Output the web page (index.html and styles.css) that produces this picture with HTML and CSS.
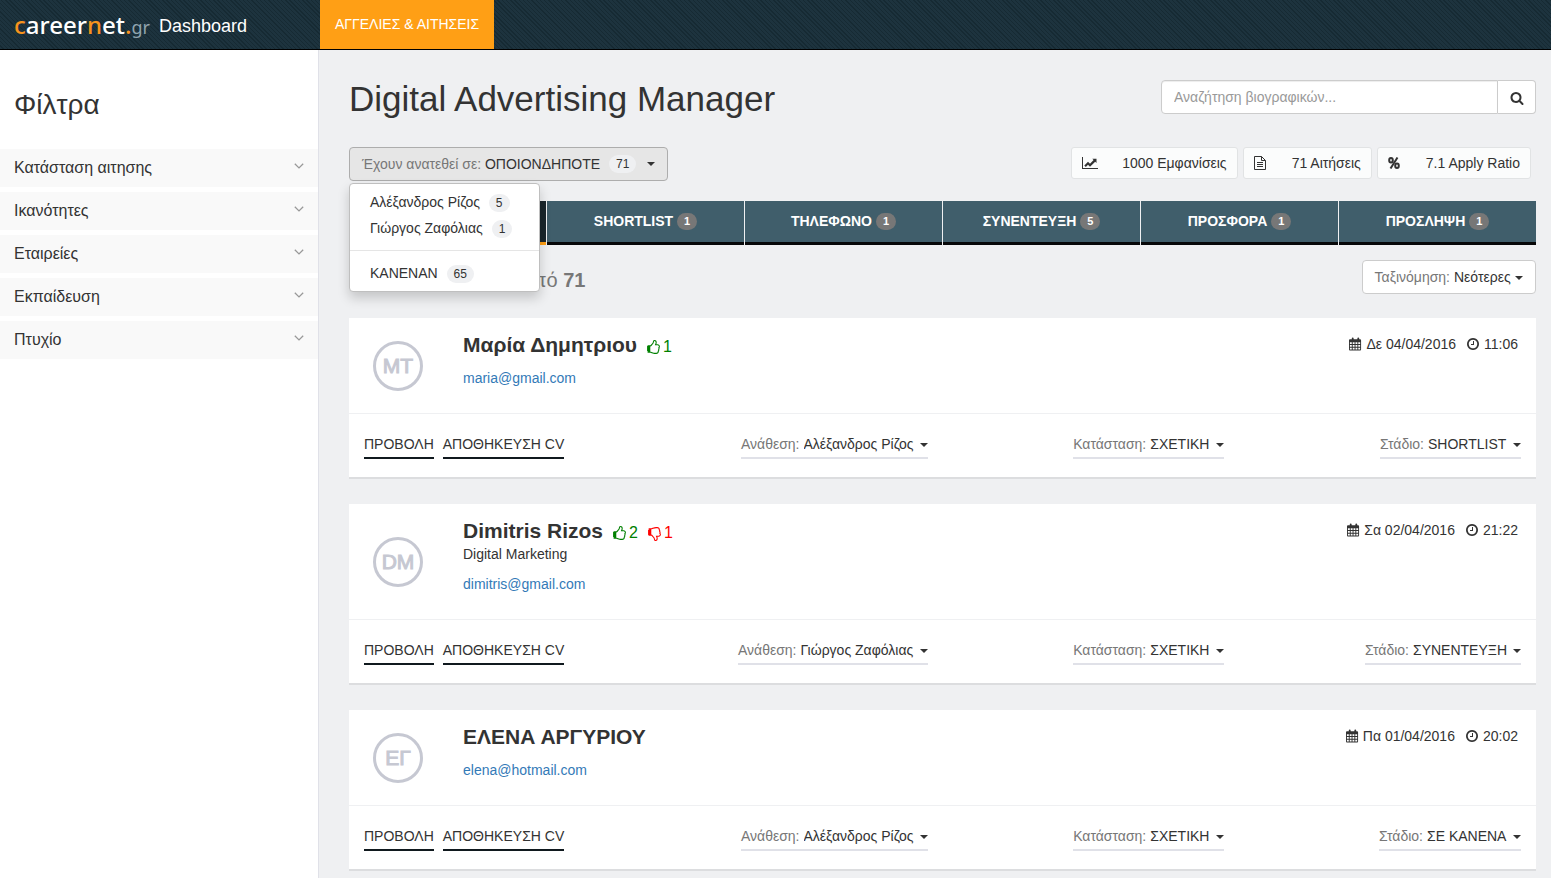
FILE: index.html
```html
<!DOCTYPE html>
<html lang="el">
<head>
<meta charset="utf-8">
<title>careernet.gr Dashboard</title>
<link rel="stylesheet" href="styles.css">
</head>
<body>
<svg class="sprite" aria-hidden="true">
  <symbol id="search" viewBox="0 0 1792 1792"><path d="M1216 832q0-185-131.5-316.5t-316.5-131.5-316.5 131.5-131.5 316.5 131.5 316.5 316.5 131.5 316.5-131.5 131.5-316.5zm512 832q0 52-38 90t-90 38q-54 0-90-38l-343-342q-179 124-399 124-143 0-273.5-55.5t-225-150-150-225-55.5-273.5 55.5-273.5 150-225 225-150 273.5-55.5 273.5 55.5 225 150 150 225 55.5 273.5q0 220-124 399l343 343q37 37 37 90z"/></symbol>
  <symbol id="thumb" viewBox="0 0 1792 1792"><path d="M256 1408q0-26-19-45t-45-19-45 19-19 45 19 45 45 19 45-19 19-45zm1280-640q0-51-39-89.500t-89-38.500h-352q0-58 48-159.500t48-160.500q0-98-32-145t-128-47q-26 26-38 85t-30.500 125.500-59.500 109.500q-22 23-77 91-4 5-23 30t-31.500 41-34.500 42.500-40 44-38.500 35.500-40 27-35.500 9h-32v640h32q13 0 31.500 3t33 6.500 38 11 35 11.500 35.500 12.500 29 10.500q211 73 342 73h121q192 0 192-167 0-26-5-56 30-16 47.500-52.500t17.500-73.500-18-69q53-50 53-119 0-25-10-55.500t-25-47.500q32-1 53.500-47t21.500-81zm128-1q0 89-49 163 9 33 9 69 0 77-38 144 3 21 3 43 0 101-60 178 1 139-85 219.500t-227 80.500h-36-93q-96 0-189.500-22.500t-216.500-65.500q-116-40-138-40h-288q-53 0-90.500-37.500t-37.500-90.500v-640q0-53 37.500-90.500t90.500-37.500h274q36-24 137-155 58-75 107-128 24-25 35.500-85.500t30.500-126.500 62-108q39-37 90-37 84 0 151 32.500t102 101.500 35 186q0 93-48 192h176q104 0 180 76t76 179z"/></symbol>
  <symbol id="clock" viewBox="0 0 1792 1792"><path d="M1024 544v448q0 14-9 23t-23 9h-320q-14 0-23-9t-9-23v-64q0-14 9-23t23-9h224v-352q0-14 9-23t23-9h64q14 0 23 9t9 23zm416 352q0-148-73-273t-198-198-273-73-273 73-198 198-73 273 73 273 198 198 273 73 273-73 198-198 73-273zm224 0q0 209-103 385.500t-279.500 279.500-385.500 103-385.500-103-279.500-279.500-103-385.500 103-385.500 279.500-279.500 385.500-103 385.500 103 279.500 279.500 103 385.500z"/></symbol>
  <symbol id="calendar" viewBox="0 0 14 14"><path fill-rule="evenodd" d="M1 2h2V1q0-1 1-1t1 1v1h4V1q0-1 1-1t1 1v1h1q1 0 1 1v10q0 1-1 1H1q-1 0-1-1V3q0-1 1-1zM1 5v2h2V5zM4 5v2h2V5zM7 5v2h2V5zM10 5v2h2V5zM1 8v2h2V8zM4 8v2h2V8zM7 8v2h2V8zM10 8v2h2V8zM1 11v2h2v-2zM4 11v2h2v-2zM7 11v2h2v-2zM10 11v2h2v-2z"/></symbol>
  <symbol id="chart" viewBox="0 0 16 14"><path d="M0 1h1v11h15v1H0zM2.300 9.400L6 5.700l2 2 3.600-3.600L10.300 2.800H14.500V7l-1.300-1.300L8 10.800l-2-2-2.200 2.200z"/></symbol>
  <symbol id="file" viewBox="0 0 12 14"><path fill="none" stroke="currentColor" d="M.5.500h7l4 4v9H.500zM7.500.500v4h4M3 6.500h6M3 8.500h6M3 10.500h6"/></symbol>
  <symbol id="percent" viewBox="0 0 12 12"><g fill="none" stroke="currentColor" stroke-width="2"><ellipse cx="3" cy="3.200" rx="1.800" ry="2.200"/><ellipse cx="9" cy="8.800" rx="1.800" ry="2.200"/><path d="M9.500.500L2.500 11.500"/></g></symbol>
  <symbol id="chevron" viewBox="0 0 10 6"><path fill="none" stroke="currentColor" stroke-width="1.300" d="M.8.700L5 4.900 9.200.700"/></symbol>
</svg>

<header class="topbar">
  <a class="brand" href="#"><span class="logo"><b>c</b>areer<b>n</b>et<b>.</b><i>gr</i></span><span class="product">Dashboard</span></a>
  <nav><a class="nav-link" href="#">ΑΓΓΕΛΙΕΣ &amp; ΑΙΤΗΣΕΙΣ</a></nav>
</header>

<div class="page">
  <aside class="sidebar">
    <h2>Φίλτρα</h2>
    <button class="filter">Κατάσταση αιτησης<svg><use href="#chevron"/></svg></button>
    <button class="filter">Ικανότητες<svg><use href="#chevron"/></svg></button>
    <button class="filter">Εταιρείες<svg><use href="#chevron"/></svg></button>
    <button class="filter">Εκπαίδευση<svg><use href="#chevron"/></svg></button>
    <button class="filter">Πτυχίο<svg><use href="#chevron"/></svg></button>
  </aside>

  <main class="main">
    <div class="title-row">
      <h1>Digital Advertising Manager</h1>
      <form class="search">
        <input type="text" aria-label="Αναζήτηση βιογραφικών" placeholder="Αναζήτηση βιογραφικών...">
        <button type="button" aria-label="Αναζήτηση"><svg class="icon"><use href="#search"/></svg></button>
      </form>
    </div>

    <div class="tools">
      <div class="dropdown">
        <button class="toggle" aria-expanded="true"><span class="muted">Έχουν ανατεθεί σε:</span> ΟΠΟΙΟΝΔΗΠΟΤΕ <span class="count">71</span><span class="caret"></span></button>
        <ul class="menu">
          <li><a href="#">Αλέξανδρος Ρίζος <span class="count">5</span></a></li>
          <li><a href="#">Γιώργος Ζαφόλιας <span class="count">1</span></a></li>
          <li class="divider"></li>
          <li><a href="#">ΚΑΝΕΝΑΝ <span class="count">65</span></a></li>
        </ul>
      </div>
      <div class="stats">
        <div class="stat"><svg class="chart"><use href="#chart"/></svg>1000 Εμφανίσεις</div>
        <div class="stat"><svg class="file"><use href="#file"/></svg>71 Αιτήσεις</div>
        <div class="stat"><svg class="percent"><use href="#percent"/></svg>7.1 Apply Ratio</div>
      </div>
    </div>

    <nav class="tabs">
      <a class="tab active" href="#" aria-label="Όλες"></a>
      <a class="tab" href="#">SHORTLIST <span class="badge">1</span></a>
      <a class="tab" href="#">ΤΗΛΕΦΩΝΟ <span class="badge">1</span></a>
      <a class="tab" href="#">ΣΥΝΕΝΤΕΥΞΗ <span class="badge">5</span></a>
      <a class="tab" href="#">ΠΡΟΣΦΟΡΑ <span class="badge">1</span></a>
      <a class="tab" href="#">ΠΡΟΣΛΗΨΗ <span class="badge">1</span></a>
    </nav>

    <div class="list-head">
      <h3>Αιτήσεις 1 έως 20 <span>από <b>71</b></span></h3>
      <div class="sort"><label for="sort">Ταξινόμηση:</label><select id="sort"><option>Νεότερες</option></select></div>
    </div>

    <article class="card">
      <div class="card-top">
        <div class="avatar">ΜΤ</div>
        <div class="person">
          <h4>Μαρία Δημητριου <span class="vote up"><svg><use href="#thumb"/></svg>1</span></h4>
          <p><a href="#">maria@gmail.com</a></p>
        </div>
        <div class="when"><svg><use href="#calendar"/></svg><span>Δε 04/04/2016</span><svg class="clock"><use href="#clock"/></svg><span>11:06</span></div>
      </div>
      <div class="card-actions">
        <div class="links"><a href="#">ΠΡΟΒΟΛΗ</a><a href="#">ΑΠΟΘΗΚΕΥΣΗ CV</a></div>
        <div class="pick"><label for="a1">Ανάθεση:</label><select id="a1"><option>Αλέξανδρος Ρίζος</option></select></div>
        <div class="pick"><label for="k1">Κατάσταση:</label><select id="k1"><option>ΣΧΕΤΙΚΗ</option></select></div>
        <div class="pick"><label for="s1">Στάδιο:</label><select id="s1"><option>SHORTLIST</option></select></div>
      </div>
    </article>

    <article class="card">
      <div class="card-top">
        <div class="avatar">DM</div>
        <div class="person">
          <h4>Dimitris Rizos <span class="vote up"><svg><use href="#thumb"/></svg>2</span><span class="vote down"><svg><use href="#thumb"/></svg>1</span></h4>
          <div>Digital Marketing</div>
          <p><a href="#">dimitris@gmail.com</a></p>
        </div>
        <div class="when"><svg><use href="#calendar"/></svg><span>Σα 02/04/2016</span><svg class="clock"><use href="#clock"/></svg><span>21:22</span></div>
      </div>
      <div class="card-actions">
        <div class="links"><a href="#">ΠΡΟΒΟΛΗ</a><a href="#">ΑΠΟΘΗΚΕΥΣΗ CV</a></div>
        <div class="pick"><label for="a2">Ανάθεση:</label><select id="a2"><option>Γιώργος Ζαφόλιας</option></select></div>
        <div class="pick"><label for="k2">Κατάσταση:</label><select id="k2"><option>ΣΧΕΤΙΚΗ</option></select></div>
        <div class="pick"><label for="s2">Στάδιο:</label><select id="s2"><option>ΣΥΝΕΝΤΕΥΞΗ</option></select></div>
      </div>
    </article>

    <article class="card">
      <div class="card-top">
        <div class="avatar">ΕΓ</div>
        <div class="person">
          <h4>ΕΛΕΝΑ ΑΡΓΥΡΙΟΥ</h4>
          <p><a href="#">elena@hotmail.com</a></p>
        </div>
        <div class="when"><svg><use href="#calendar"/></svg><span>Πα 01/04/2016</span><svg class="clock"><use href="#clock"/></svg><span>20:02</span></div>
      </div>
      <div class="card-actions">
        <div class="links"><a href="#">ΠΡΟΒΟΛΗ</a><a href="#">ΑΠΟΘΗΚΕΥΣΗ CV</a></div>
        <div class="pick"><label for="a3">Ανάθεση:</label><select id="a3"><option>Αλέξανδρος Ρίζος</option></select></div>
        <div class="pick"><label for="k3">Κατάσταση:</label><select id="k3"><option>ΣΧΕΤΙΚΗ</option></select></div>
        <div class="pick"><label for="s3">Στάδιο:</label><select id="s3"><option>ΣΕ ΚΑΝΕΝΑ</option></select></div>
      </div>
    </article>
  </main>
</div>
</body>
</html>
```

FILE: styles.css
```css
* { box-sizing: border-box; }
body {
  margin: 0;
  background: #eff0f2;
  color: #333;
  font: 14px/20px "Liberation Sans", Arial, sans-serif;
}
h1, h2, h3, h4, p, ul { margin: 0; padding: 0; font-weight: 400; }
button, input, select { font: inherit; color: inherit; }
button { cursor: pointer; }
a { color: inherit; text-decoration: none; }
svg { fill: currentColor; flex: none; }
.sprite { display: none; }

.topbar {
  display: grid;
  grid-template-columns: 320px 1fr;
  height: 50px;
  border-bottom: 1px solid #000;
  background: repeating-linear-gradient(45deg, #1d333e 0 2px, #162a33 2px 3px);
  color: #fff;
}
.brand { display: flex; align-items: center; gap: 9px; padding: 3px 0 0 14px; }
.logo { font: 500 24px/28px "Noto Sans", sans-serif; }
.logo b { color: #f7941d; font-weight: 500; }
.logo i { color: #90a4ae; font-style: normal; font-weight: 400; font-size: 18px; }
.product { font-size: 18px; }
nav { display: flex; }
.nav-link { padding: 14px 15px; background: #ff9f15; line-height: 20px; }

.page { display: grid; grid-template-columns: 319px 1fr; min-height: calc(100vh - 50px); }
.sidebar { background: #fff; border-right: 1px solid #e0e1e8; padding-top: 38px; }
.sidebar h2 { padding-left: 14px; margin-bottom: 28px; font-size: 28px; line-height: 33px; }
.filter {
  display: flex;
  align-items: center;
  justify-content: space-between;
  width: 100%;
  height: 38px;
  margin-bottom: 5px;
  padding: 0 14px;
  border: 0;
  background: #f9f9f9;
  font-size: 16px;
}
.filter svg { width: 10px; height: 6px; margin-bottom: 4px; color: #999; }

.main { padding: 30px 15px 0 30px; min-width: 0; }
.title-row { display: flex; justify-content: space-between; }
h1 { font-size: 35px; line-height: 38px; height: 40px; }
.search { display: flex; width: 375px; height: 34px; }
.search input {
  flex: 1;
  min-width: 0;
  padding: 6px 12px;
  border: 1px solid #ccc;
  border-radius: 4px 0 0 4px;
  background: #fff;
  box-shadow: inset 0 1px 1px rgba(0, 0, 0, .075);
}
.search input::placeholder { color: #999; }
.search button {
  width: 38px;
  padding: 0;
  border: 1px solid #ccc;
  border-left: 0;
  border-radius: 0 4px 4px 0;
  background: #fff;
}
.icon { width: 14px; height: 14px; vertical-align: middle; }

.tools { display: flex; justify-content: space-between; margin-top: 27px; }
.dropdown { position: relative; }
.toggle {
  display: flex;
  align-items: center;
  height: 34px;
  padding: 0 12px;
  border: 1px solid #adadad;
  border-radius: 4px;
  background: #e6e6e6;
  white-space: pre;
}
.muted { color: #777; }
.count {
  display: inline-block;
  margin-left: 5px;
  padding: 0 7px;
  border-radius: 9px;
  background: #eff0f2;
  font-size: 12px;
  line-height: 18px;
}
.caret { margin-left: 11px; border: 4px solid transparent; border-top-color: #333; border-bottom: 0; }
.menu {
  position: absolute;
  top: 36px;
  left: 0;
  z-index: 2;
  width: 191px;
  padding: 5px 0;
  border: 1px solid #bfbfbf;
  border-radius: 4px;
  background: #fff;
  box-shadow: 0 6px 12px rgba(0, 0, 0, .18);
  list-style: none;
}
.menu a { display: block; padding: 3px 20px; white-space: nowrap; }
.menu .divider { height: 1px; margin: 9px 0; background: #e5e5e5; }

.stats { display: flex; gap: 5px; padding-right: 5px; }
.stat {
  display: flex;
  align-items: center;
  height: 32px;
  padding: 0 10px;
  border: 1px solid #e1e3e4;
  border-radius: 3px;
  background: #fbfcfc;
}
.chart { width: 16px; height: 14px; margin-right: 24px; }
.file { width: 12px; height: 14px; margin-right: 26px; }
.percent { width: 12px; height: 12px; margin-right: 26px; }

.tabs { display: grid; grid-template-columns: repeat(6, 1fr); gap: 1px; margin-top: 20px; }
.tab {
  height: 44px;
  padding-top: 10px;
  border-bottom: 3px solid #070809;
  background: #405e6b;
  color: #fff;
  font-weight: 700;
  text-align: center;
}
.active { background: #1a262c; border-color: #ff9f15; }
.badge {
  display: inline-block;
  padding: 3px 7px;
  border-radius: 9px;
  background: #777;
  font-size: 11px;
  line-height: 11px;
  vertical-align: 1px;
}

.list-head { display: flex; justify-content: space-between; height: 34px; margin: 15px 0 24px; }
h3 { font-size: 20px; line-height: 40px; font-weight: 700; }
h3 span { color: #777; font-weight: 400; }
select {
  appearance: none;
  border: 0;
  margin: 0;
  padding: 0 14px 0 0;
  height: 20px;
  background: url("data:image/svg+xml,%3Csvg xmlns='http://www.w3.org/2000/svg' width='8' height='4'%3E%3Cpath fill='%23333' d='M0 0h8L4 4z'/%3E%3C/svg%3E") no-repeat right 9px;
}
label { color: #777; }
.sort {
  display: flex;
  gap: 4px;
  height: 34px;
  padding: 6px 12px;
  border: 1px solid #ccc;
  border-radius: 4px;
  background: #fff;
}
.sort select { padding-right: 12px; }

.card { margin-bottom: 25px; border-bottom: 2px solid #dcdddf; background: #fff; }
.card:last-child { margin-bottom: 0; }
.card-top { display: flex; padding: 15px 18px 25px 24px; border-bottom: 1px solid #eff0f2; }
.avatar {
  display: flex;
  align-items: center;
  justify-content: center;
  align-self: center;
  width: 50px;
  height: 50px;
  margin: -15px 40px -25px 0;
  border: 3px solid #c6c8d2;
  border-radius: 50%;
  color: #c6c8d2;
  font-size: 21px;
  -webkit-text-stroke: 1px #c6c8d2;
}
.person { flex: 1; }
h4 { display: flex; align-items: flex-start; height: 25px; font-size: 21px; line-height: 23px; font-weight: 700; }
.person p { margin-top: 10px; color: #337ab7; }
.vote { display: inline-flex; align-items: center; gap: 2px; margin: 4px 0 0 9px; font-size: 16px; line-height: 20px; font-weight: 400; }
.vote svg { width: 15px; height: 15px; }
.up { color: green; }
.down { color: red; }
.down svg { transform: scaleY(-1); }
.when { display: flex; align-items: center; gap: 4px; height: 22px; }
.when svg { width: 13px; height: 14px; }
.when .clock { width: 14px; margin-left: 6px; }
.card-actions { display: grid; grid-template-columns: repeat(4, 1fr); gap: 30px; padding: 20px 15px 18px; }
.links { display: flex; gap: 9px; white-space: nowrap; }
.links a { padding-bottom: 3px; border-bottom: 2px solid #10191e; }
.pick { display: flex; gap: 4px; justify-self: end; padding-bottom: 3px; border-bottom: 2px solid #e0e1e8; white-space: nowrap; }
```
